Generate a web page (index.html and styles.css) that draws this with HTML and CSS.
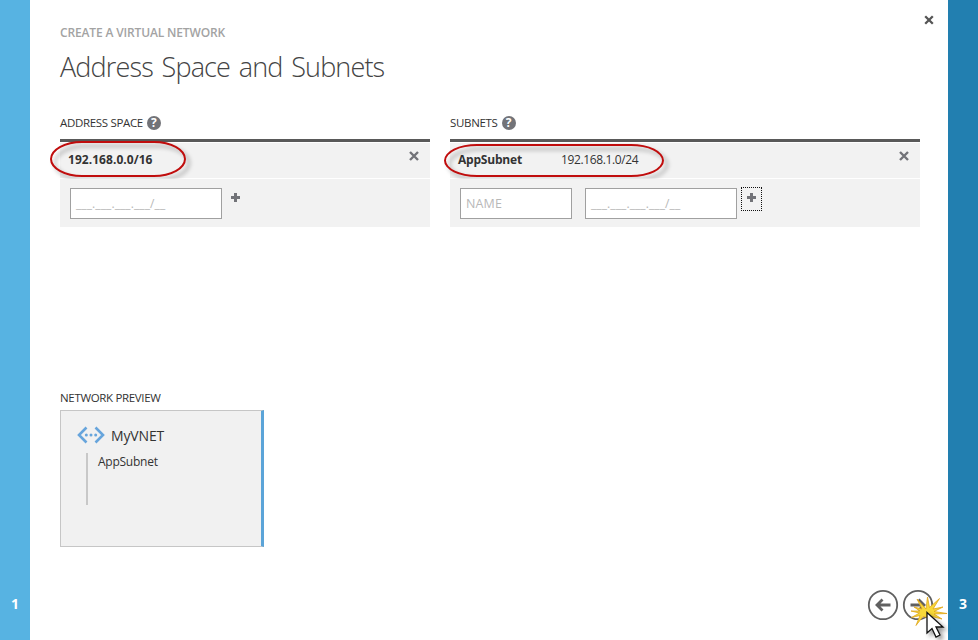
FILE: index.html
```html
<!DOCTYPE html>
<html lang="en">
<head>
<meta charset="utf-8">
<title>Create a Virtual Network</title>
<link rel="stylesheet" href="styles.css">
</head>
<body>
<div class="wizard">
  <aside class="step step-prev"><span>1</span></aside>
  <main class="page">
    <button class="close" aria-label="Close"><svg width="10" height="10" viewBox="0 0 10 10"><path d="M1.200 1.200l7.600 7.600M8.800 1.200l-7.600 7.600" stroke="#555" stroke-width="2.300"/></svg></button>
    <p class="crumb"><span>CREATE A VIRTUAL NETWORK</span></p>
    <h1>Address Space and Subnets</h1>
    <div class="columns">
      <section class="space">
        <h2><span>ADDRESS SPACE</span><i class="help">?</i></h2>
        <div class="table">
          <div class="row entry">
            <b class="address">192.168.0.0/16</b>
            <svg class="remove" width="10" height="10" viewBox="0 0 10 10"><path d="M1 1l8 8M9 1l-8 8" stroke="#727378" stroke-width="2.400"/></svg>
            <div class="callout callout-space"></div>
          </div>
          <div class="row fields">
            <div class="input cidr">___.___.___.___/__</div>
            <span class="add add-space"><svg width="9" height="9" viewBox="0 0 9 9"><path d="M4.500 0v9M0 4.500h9" stroke="#727378" stroke-width="3"/></svg></span>
          </div>
        </div>
      </section>
      <section class="subnets">
        <h2><span>SUBNETS</span><i class="help">?</i></h2>
        <div class="table">
          <div class="row entry">
            <b class="name">AppSubnet</b>
            <span class="range">192.168.1.0/24</span>
            <svg class="remove" width="10" height="10" viewBox="0 0 10 10"><path d="M1 1l8 8M9 1l-8 8" stroke="#727378" stroke-width="2.400"/></svg>
            <div class="callout callout-subnet"></div>
          </div>
          <div class="row fields">
            <div class="input name-input">NAME</div>
            <div class="input cidr">___.___.___.___/__</div>
            <span class="add focused"><svg width="9" height="9" viewBox="0 0 9 9"><path d="M4.500 0v9M0 4.500h9" stroke="#727378" stroke-width="3"/></svg></span>
          </div>
        </div>
      </section>
    </div>
    <section class="preview">
      <h2><span>NETWORK PREVIEW</span></h2>
      <div class="card">
        <div class="vnet">
          <svg width="28" height="18" viewBox="0 0 28 18"><path d="M9.500 1.500L2 9l7.500 7.500M18.500 1.500L26 9l-7.500 7.500" fill="none" stroke="#67a5dc" stroke-width="2.600"/><g fill="#67a5dc"><circle cx="9.300" cy="9" r="1.500"/><circle cx="14" cy="9" r="1.500"/><circle cx="18.700" cy="9" r="1.500"/></g></svg>
          <span>MyVNET</span>
        </div>
        <div class="children"><span>AppSubnet</span></div>
      </div>
    </section>
    <nav class="nav">
      <svg width="32" height="32" viewBox="0 0 32 32" fill="none" stroke="#606060"><circle cx="16" cy="16" r="14.200" stroke-width="1.800"/><path d="M23.500 16H10M15.500 10.500L10 16l5.500 5.500" stroke-width="2.800"/></svg>
      <svg width="32" height="32" viewBox="0 0 32 32" fill="none" stroke="#606060"><circle cx="16" cy="16" r="14.200" stroke-width="1.800"/><path d="M8.500 16H22M16.500 10.500L22 16l-5.500 5.500" stroke-width="2.800"/></svg>
    </nav>
    <svg class="pointer" width="54" height="55" viewBox="0 0 54 55">
      <path class="burst" d="M19 14l9 10 1.500-12 2 10.500 10-9-6.500 10.500 10-2-9 4.500 13 2-13 .500 8 5-10-2.500-4 1-5-1-7 9 4-10-8.500 2 8-4.500-8.500-2 9 0-6-4 8 2z"/>
      <path class="arrow" d="M29 27.500V48l5-4.500 4 8.500 4-2-4-8h7z"/>
    </svg>
  </main>
  <aside class="step step-next"><span>3</span></aside>
</div>
</body>
</html>
```
FILE: styles.css
```css
* { box-sizing: border-box; }
body { margin: 0; background: #fff; color: #333; font-family: "Open Sans", "Noto Sans", sans-serif; font-size: 12px; }
.wizard { display: flex; width: 978px; height: 640px; overflow: hidden; }
.step { width: 30px; flex: none; display: flex; align-items: flex-end; justify-content: center; padding-bottom: 27px; color: #fff; font-size: 14px; line-height: 18px; font-weight: 700; }
.step-prev { background: #57b3e2; }
.step-next { background: #227fb0; }
.page { position: relative; flex: 1; padding: 24px 28px 0 30px; }
.close { position: absolute; right: 14px; top: 15px; padding: 0; border: 0; background: none; line-height: 0; }
.crumb { margin: 0; height: 18px; line-height: 18px; color: #a3a3a3; font-weight: 600; letter-spacing: -0.15px; white-space: nowrap; }
h1 { margin: 6px 0 0; height: 38px; line-height: 38px; font-size: 27px; font-weight: 300; color: #444; letter-spacing: -0.85px; word-spacing: 2.5px; white-space: nowrap; }
.columns { display: flex; gap: 20px; margin-top: 28px; height: 275px; }
.space { width: 370px; }
.subnets { width: 470px; }
h2 { display: flex; align-items: center; gap: 4px; margin: 0; height: 18px; font-size: 11.5px; font-weight: 400; line-height: 18px; letter-spacing: -0.33px; white-space: nowrap; }
.help { width: 14px; height: 14px; border-radius: 50%; background: #727378; color: #fff; font-style: normal; font-weight: 700; font-size: 12px; line-height: 14px; text-align: center; letter-spacing: 0; }
.table { margin-top: 7px; border-top: 3px solid #595959; padding-top: 1px; }
.row { position: relative; display: flex; background: #f2f2f2; }
.entry { height: 35px; padding: 0 11px 0 8px; line-height: 34px; }
.fields { margin-top: 1px; height: 48px; padding: 9px 10px; }
.remove { margin: 8px 0 0 auto; }
.address { letter-spacing: 0.05px; }
.name { width: 103px; letter-spacing: -0.2px; }
.range { letter-spacing: -0.38px; }
.callout { position: absolute; border: 2px solid #c00d0d; filter: drop-shadow(4px 4px 2px #0005); }
.callout-space { left: -10px; top: -2px; width: 136px; height: 36px; border-radius: 32px / 18px; }
.callout-subnet { left: -6px; top: 1px; width: 220px; height: 33px; border-radius: 34px / 17px; }
.input { height: 31px; border: 1px solid #a0a0a0; background: #fff; color: #b8b8b8; padding: 0 5px; line-height: 29px; white-space: nowrap; }
.cidr { width: 152px; letter-spacing: 0.1px; }
.name-input { width: 112px; margin-right: 13px; font-size: 12.5px; letter-spacing: 0.15px; }
.add { display: block; width: 21px; height: 24px; margin: -1px 0 0 4px; padding: 6px; line-height: 0; }
.add-space { margin-left: 3px; }
.focused { border: 1px dotted #111; padding: 5px; }
.card { margin-top: 3px; width: 204px; height: 137px; background: #f1f1f1; border: 1px solid #c6c6c6; border-right: 3px solid #5ba4d8; padding: 14px 16px; }
.vnet { display: flex; align-items: center; gap: 6px; height: 20px; font-size: 14px; letter-spacing: -0.15px; }
.children { margin: 8px 0 0 9px; height: 52px; border-left: 2px solid #c8c8c8; padding-left: 10px; line-height: 18px; letter-spacing: -0.25px; }
.nav { position: absolute; right: 14px; bottom: 19px; display: flex; gap: 3px; }
.pointer { position: absolute; left: 868px; top: 585px; overflow: visible; }
.burst { fill: #f7d83a; stroke: #dfa51a; stroke-width: 0.8; }
.arrow { fill: #fff; stroke: #111; stroke-width: 1.300; filter: drop-shadow(3px 3px 2px #0006); }
```
